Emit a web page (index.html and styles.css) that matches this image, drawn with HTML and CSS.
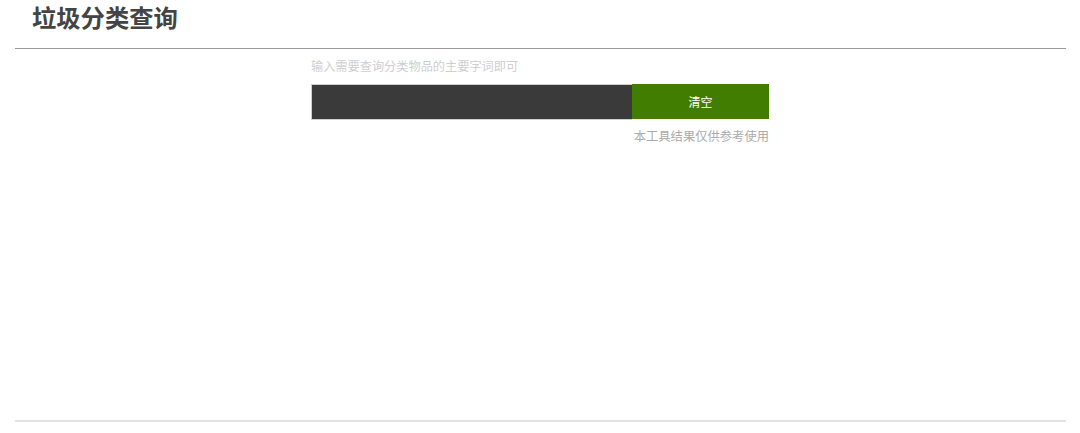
FILE: index.html
```html
<!DOCTYPE html>
<html lang="zh-CN">
<head>
<meta charset="utf-8">
<title>垃圾分类查询</title>
<link rel="stylesheet" href="styles.css">
</head>
<body>
<div class="page">
  <header class="header">
    <h1 class="title">垃圾分类查询</h1>
  </header>
  <main class="main">
    <div class="tool">
      <p class="hint">输入需要查询分类物品的主要字词即可</p>
      <div class="search-row">
        <input class="search-input" type="text" aria-label="搜索">
        <button class="clear-btn" type="button">清空</button>
      </div>
      <p class="note">本工具结果仅供参考使用</p>
    </div>
  </main>
</div>
</body>
</html>
```

FILE: styles.css
```css
html, body {
  margin: 0;
  padding: 0;
  background: #fff;
}
body {
  font-family: "Noto Sans CJK SC", "Liberation Sans", sans-serif;
}
.page {
  padding: 0 14px 0 15px;
}
.header {
  border-bottom: 1px solid #9a9a9a;
  padding: 0 0 12px 17px;
  height: 36px;
}
.title {
  margin: 0;
  font-size: 24.3px;
  line-height: 34px;
  font-weight: 700;
  color: #444;
}
.main {
  height: 371px;
  border-bottom: 2px solid #e2e2e2;
  display: flex;
  justify-content: center;
}
.tool {
  width: 458px;
  margin-right: 1px;
  padding-top: 9px;
}
.hint {
  margin: 0;
  font-size: 12.2px;
  line-height: 16px;
  color: #cfcfcf;
}
.search-row {
  display: flex;
  align-items: flex-start;
  margin-top: 10px;
}
.search-input {
  box-sizing: border-box;
  width: 321px;
  height: 36px;
  margin: 0;
  border: 1px solid #d0d0d0;
  border-right: none;
  background: #3a3a3a;
  color: #fff;
  outline: none;
  padding: 0 8px;
}
.clear-btn {
  box-sizing: border-box;
  width: 137px;
  height: 35px;
  margin: 0;
  border: none;
  background: #407d00;
  color: #fff;
  font-family: "Noto Sans CJK SC", "Liberation Sans", sans-serif;
  font-size: 12px;
  padding: 0;
}
.note {
  margin: 8px 0 0;
  font-size: 12.3px;
  line-height: 16px;
  color: #ababab;
  text-align: right;
}
```
